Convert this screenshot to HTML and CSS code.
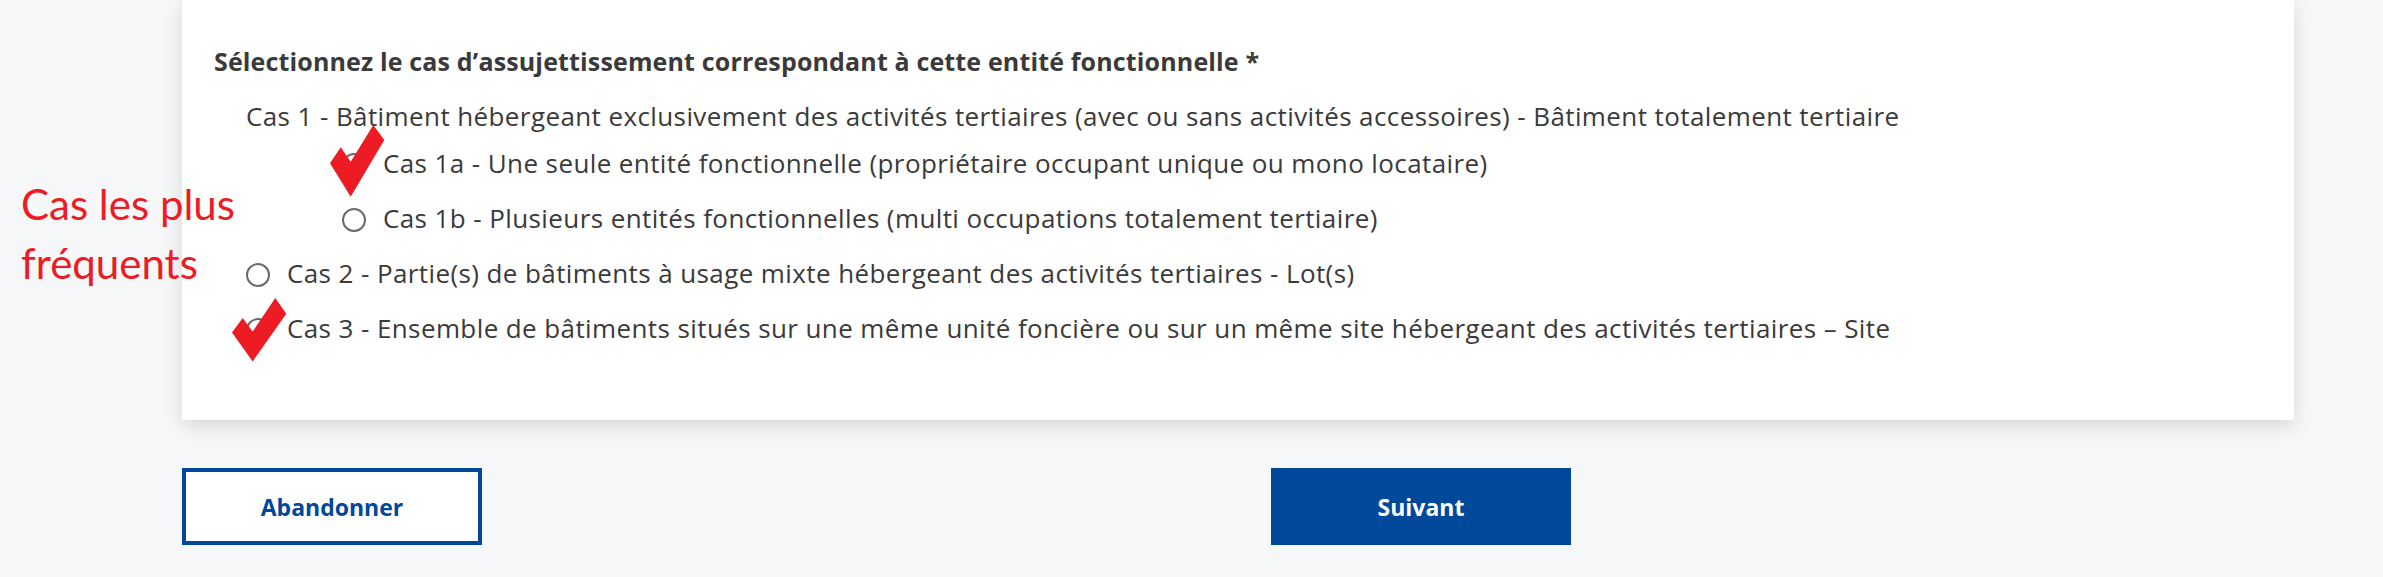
FILE: index.html
```html
<!DOCTYPE html>
<html lang="fr">
<head>
<meta charset="utf-8">
<title>Cas d'assujettissement</title>
<link rel="stylesheet" href="styles.css">
</head>
<body>
<main class="page">
  <section class="card">
    <div class="field" role="radiogroup" aria-labelledby="field-label">
      <p class="field-label" id="field-label">Sélectionnez le cas d’assujettissement correspondant à cette entité fonctionnelle *</p>
      <div class="group">
        <p class="group-title">Cas 1 - Bâtiment hébergeant exclusivement des activités tertiaires (avec ou sans activités accessoires) - Bâtiment totalement tertiaire</p>
        <div class="sub-options">
          <label class="option"><span class="radio"></span><span class="option-text">Cas 1a - Une seule entité fonctionnelle (propriétaire occupant unique ou mono locataire)</span></label>
          <label class="option"><span class="radio"></span><span class="option-text">Cas 1b - Plusieurs entités fonctionnelles (multi occupations totalement tertiaire)</span></label>
        </div>
      </div>
      <label class="option option-top"><span class="radio"></span><span class="option-text">Cas 2 - Partie(s) de bâtiments à usage mixte hébergeant des activités tertiaires - Lot(s)</span></label>
      <label class="option option-top"><span class="radio"></span><span class="option-text">Cas 3 - Ensemble de bâtiments situés sur une même unité foncière ou sur un même site hébergeant des activités tertiaires – Site</span></label>
    </div>
  </section>

  <div class="actions">
    <button class="btn btn-secondary" type="button">Abandonner</button>
    <button class="btn btn-primary" type="button">Suivant</button>
  </div>

  <p class="annotation">Cas les plus<br>fréquents</p>
  <svg class="check check-1" viewBox="0 0 55 72" preserveAspectRatio="none" aria-hidden="true"><polygon points="10.7,22.3 20.7,36.7 43.3,0 54.3,15 20.7,71.7 0,38.3"/></svg>
  <svg class="check check-2" viewBox="0 0 55 64" preserveAspectRatio="none" aria-hidden="true"><polygon points="10.7,20 20.7,33.4 43.3,0 54.3,15.7 20.7,63.4 0,34.4"/></svg>
</main>
</body>
</html>
```
FILE: styles.css
```css
* { box-sizing: border-box; }

html, body {
  margin: 0;
  padding: 0;
  background: #f6f7f9;
}

body {
  font-family: "Open Sans", "Liberation Sans", sans-serif;
  color: #3a3a3a;
}

.page {
  position: relative;
  width: 2383px;
  height: 577px;
  padding: 0 89px 0 182px;
  overflow: hidden;
}

.card {
  background: #ffffff;
  padding: 46px 32px 77px 32px;
  box-shadow: 0 6px 18px rgba(0, 0, 0, 0.13);
}

.field {
  display: flex;
  flex-direction: column;
  gap: 25px;
}

.field-label {
  margin: 0;
  font-weight: 700;
  font-size: 25px;
  line-height: 30px;
  letter-spacing: 0.15px;
  color: #3a3a3a;
}

.group {
  display: flex;
  flex-direction: column;
  gap: 17px;
  padding-left: 32px;
}

.group-title {
  margin: 0;
  font-size: 26px;
  line-height: 30px;
  letter-spacing: 0.4px;
}

.sub-options {
  display: flex;
  flex-direction: column;
  gap: 25px;
  padding-left: 96px;
}

.option {
  display: flex;
  align-items: flex-start;
  gap: 17px;
  font-size: 26px;
  line-height: 30px;
  letter-spacing: 0.4px;
}

.option-top {
  padding-left: 32px;
}

.radio {
  flex: none;
  width: 24px;
  height: 24px;
  margin-top: 5px;
  border: 2px solid #6a6a6a;
  border-radius: 50%;
  background: #fff;
}

.actions {
  display: grid;
  grid-template-columns: 300px 300px;
  column-gap: 789px;
  margin-top: 48px;
}

.btn {
  height: 77px;
  font-family: "Open Sans", "Liberation Sans", sans-serif;
  font-weight: 700;
  font-size: 23px;
  cursor: pointer;
}

.btn-secondary {
  background: #ffffff;
  color: #00489a;
  border: 4px solid #00489a;
}

.btn-primary {
  background: #00489a;
  color: #ffffff;
  border: 0;
}

.annotation {
  position: absolute;
  left: 21px;
  top: 175px;
  margin: 0;
  font-family: Lato, "Liberation Sans", sans-serif;
  font-size: 42px;
  line-height: 59px;
  color: #ed1c24;
}

.check {
  position: absolute;
  fill: #ed1c24;
}

.check-1 {
  left: 330px;
  top: 125px;
  width: 55px;
  height: 72px;
}

.check-2 {
  left: 232px;
  top: 298px;
  width: 55px;
  height: 64px;
}
```
